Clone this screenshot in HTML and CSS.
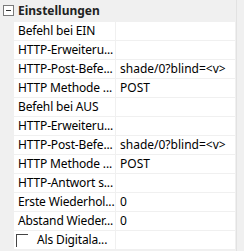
FILE: index.html
```html
<!DOCTYPE html>
<html lang="de">
<head>
    <meta charset="UTF-8">
    <title>Einstellungen</title>
    <link rel="stylesheet" href="styles.css">
</head>
<body>
    <div class="grid">
        <div class="header">
            <span class="toggle"></span>
            <span class="title">Einstellungen</span>
        </div>
        <div class="row"><div class="name">Befehl bei EIN</div><div class="value"></div></div>
        <div class="row"><div class="name">HTTP-Erweiteru...</div><div class="value"></div></div>
        <div class="row"><div class="name">HTTP-Post-Befe...</div><div class="value">shade/0?blind=&lt;v&gt;</div></div>
        <div class="row"><div class="name">HTTP Methode ...</div><div class="value">POST</div></div>
        <div class="row"><div class="name">Befehl bei AUS</div><div class="value"></div></div>
        <div class="row"><div class="name">HTTP-Erweiteru...</div><div class="value"></div></div>
        <div class="row"><div class="name">HTTP-Post-Befe...</div><div class="value">shade/0?blind=&lt;v&gt;</div></div>
        <div class="row"><div class="name">HTTP Methode ...</div><div class="value">POST</div></div>
        <div class="row"><div class="name">HTTP-Antwort s...</div><div class="value"></div></div>
        <div class="row"><div class="name">Erste Wiederhol...</div><div class="value">0</div></div>
        <div class="row"><div class="name">Abstand Wieder...</div><div class="value">0</div></div>
        <div class="row"><div class="name check"><span class="box"></span>Als Digitala...</div><div class="value"></div></div>
    </div>
    <div class="scroll"></div>
</body>
</html>
```

FILE: styles.css
```css
body {
    margin: 0;
    font-family: "Noto Sans", "Open Sans", sans-serif;
    font-size: 12px;
    color: #000;
    background-color: #f0f0f0;
    display: flex;
    height: 251px;
    overflow: hidden;
}
.grid {
    width: 237px;
    display: flex;
    flex-direction: column;
    gap: 1px;
}
.header {
    height: 21px;
    display: flex;
    align-items: center;
    background-color: #f0f0f0;
}
.toggle {
    width: 9px;
    height: 9px;
    border: 1px solid #7a7a7a;
    margin: 0 4px 0 3px;
    position: relative;
    background-color: #fff;
}
.toggle::after {
    content: "";
    position: absolute;
    left: 2px;
    top: 4px;
    width: 5px;
    height: 1px;
    background-color: #333;
}
.title {
    font-weight: bold;
    color: #222;
}
.row {
    height: 18px;
    display: grid;
    grid-template-columns: 101px 1fr;
    gap: 1px;
    margin-left: 14px;
}
.name, .value {
    background-color: #fff;
    line-height: 18px;
    white-space: nowrap;
    overflow: hidden;
}
.name {
    padding-left: 4px;
    letter-spacing: -0.15px;
}
.value {
    padding-left: 4px;
}
.check {
    display: flex;
    align-items: center;
    padding-left: 2px;
}
.box {
    width: 12px;
    height: 13px;
    border-top: 1px solid #444;
    border-left: 1px solid #444;
    margin-right: 9px;
    box-sizing: border-box;
}
.scroll {
    width: 7px;
    border-left: 1px solid #e2e2e2;
    margin-left: 1px;
}
```
